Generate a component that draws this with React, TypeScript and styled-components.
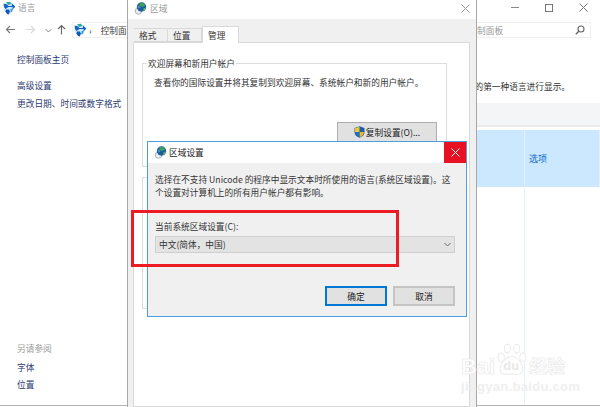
import * as React from 'react'
import styled, { createGlobalStyle } from 'styled-components'

const GlobalStyle = createGlobalStyle`
  html, body {
    margin: 0;
    padding: 0;
    background: #fff;
  }
  * {
    box-sizing: border-box;
  }
`

const FONT = `"Noto Sans CJK SC", "Liberation Sans", sans-serif`

const GlobeIcon = () => (
  <svg width="13" height="14" viewBox="0 0 13 14">
    <path d="M6.500 1.200c3 0 5 2.200 5 5.200 0 3.400-2.200 6-5 6s-5-2.600-5-6c0-3 2-5.200 5-5.200z" fill="#cfe8f8" />
    <path d="M1.500 2.500l4 1 1 2.500-3 2-1.500-2z" fill="#1565c8" />
    <path d="M4 1.200l4-.4 1.500 2-3 1.200z" fill="#2fa7a0" />
    <path d="M6 5.500h6.500l-2-1.800v1.200M12.500 5.800l-2 1.700" stroke="#0f5fc0" strokeWidth="1.200" fill="none" />
    <path d="M4 8.500l3 0 .8 2-1 3-1.800-.6-1.500-2.400z" fill="#0d58b8" />
    <path d="M8.500 8l2.500-.5-.8 3-1.700 1z" fill="#3a9bd8" />
  </svg>
)

const RegionGlobe = () => (
  <svg width="13" height="13" viewBox="0 0 13 13">
    <circle cx="4.500" cy="9" r="3.300" fill="#e8ecef" stroke="#a9b4bc" strokeWidth="1" />
    <circle cx="7.500" cy="5" r="4.700" fill="#1c5f9c" />
    <path d="M5.500 1l4 .2 1.700 2.600-3 1.200-2.700-1.500z" fill="#3fa356" />
    <path d="M9.500 6.500l2.500-.8-.8 2.600-1.800.6z" fill="#6fb95f" />
    <path d="M3.500 4l2-.5 1 2-2 1z" fill="#4c93cc" />
  </svg>
)

const ShieldIcon = () => (
  <svg width="11" height="12" viewBox="0 0 11 12">
    <path d="M5.500 0.300L10.500 2v4c0 3-2.200 4.800-5 5.700C2.700 10.800 0.500 9 0.500 6V2z" fill="#1c5fa8" />
    <path d="M5.500 0.800V6H10c-.1 2.700-2 4.300-4.500 5.200z" fill="#f3b81f" />
    <path d="M5.500 6H1c.1 2.700 2 4.300 4.500 5.200z" fill="#1c72c4" />
    <path d="M5.500 0.800L1 2.300V6h4.500z" fill="#f3c632" />
  </svg>
)

const CloseGlyph = ({ color = '#777', size = 9 }: { color?: string; size?: number }) => (
  <svg width={size} height={size} viewBox="0 0 9 9">
    <path d="M.5.500l8 8M8.500.500l-8 8" stroke={color} strokeWidth="1" fill="none" />
  </svg>
)

const SearchGlyph = () => (
  <svg width="10" height="10" viewBox="0 0 10 10">
    <circle cx="6" cy="4" r="3" stroke="#666" strokeWidth="1.100" fill="none" />
    <path d="M3.800 6.200L.8 9.200" stroke="#666" strokeWidth="1.400" />
  </svg>
)

const ArrowGlyph = ({ dir, color }: { dir: 'left' | 'right' | 'up'; color: string }) => {
  const d = {
    left: 'M10 5.500H1.500M5 2L1.500 5.500 5 9',
    right: 'M1 5.500h8.500M6 2l3.500 3.500L6 9',
    up: 'M5.500 10.500V1.500M2 5l3.500-3.500L9 5'
  }[dir]
  return (
    <svg width="11" height="12" viewBox="0 0 11 12">
      <path d={d} stroke={color} strokeWidth="1.100" fill="none" />
    </svg>
  )
}

const Chevron = ({ color = '#666' }: { color?: string }) => (
  <svg width="7" height="5" viewBox="0 0 7 5">
    <path d="M.5 1l3 3 3-3" stroke={color} strokeWidth="1" fill="none" />
  </svg>
)

const App = () => {
  return (
    <>
      <GlobalStyle />
      <Desktop>
        <ControlWindow>
          <TitleBar>
            <TitleLeft>
              <GlobeIcon />
              <FadedTitle>语言</FadedTitle>
            </TitleLeft>
            <WindowButtons>
              <MinButton />
              <MaxButton />
              <CloseGlyph />
            </WindowButtons>
          </TitleBar>
          <NavBar>
            <ArrowGlyph dir="left" color="#777" />
            <ArrowGlyph dir="right" color="#d8d8d8" />
            <Chevron color="#888" />
            <UpSlot>
              <ArrowGlyph dir="up" color="#666" />
            </UpSlot>
            <AddressBar>
              <GlobeIcon />
              <Crumb>›</Crumb>
              <CrumbText>控制面板</CrumbText>
            </AddressBar>
            <SearchBox>
              <SearchText>搜索控制面板</SearchText>
              <SearchGlyph />
            </SearchBox>
          </NavBar>
          <Body>
            <Sidebar>
              <SideLink $gap={0}>控制面板主页</SideLink>
              <SideLink $gap={13}>高级设置</SideLink>
              <SideLink $gap={5}>更改日期、时间或数字格式</SideLink>
              <SideFooter>
                <SideHeading>另请参阅</SideHeading>
                <SideLink $gap={6}>字体</SideLink>
                <SideLink $gap={4}>位置</SideLink>
              </SideFooter>
            </Sidebar>
            <Main>
              <Description>的第一种语言进行显示。</Description>
              <TableHead />
              <SelectedRow>
                <FirstCell />
                <OptionCell>选项</OptionCell>
              </SelectedRow>
              <EmptyRow>
                <FirstCell />
              </EmptyRow>
            </Main>
          </Body>
        </ControlWindow>

        <RegionWindow>
          <RegionTitle>
            <TitleLeft>
              <RegionGlobe />
              <FadedTitle>区域</FadedTitle>
            </TitleLeft>
            <CloseGlyph color="#999" />
          </RegionTitle>
          <RegionBody>
            <Tabs>
              <Tab>格式</Tab>
              <Tab>位置</Tab>
              <Tab $active>管理</Tab>
            </Tabs>
            <TabPanel>
              <GroupBox $height={104}>
                <GroupLabel>欢迎屏幕和新用户帐户</GroupLabel>
                <GroupText>
                  查看你的国际设置并将其复制到欢迎屏幕、系统帐户和新的用户帐户。
                </GroupText>
                <CopyRow>
                  <CopyButton>
                    <ShieldIcon />
                    复制设置(O)...
                  </CopyButton>
                </CopyRow>
              </GroupBox>
              <GroupBox $height={132} />
            </TabPanel>
          </RegionBody>
        </RegionWindow>

        <Dialog>
          <DialogTitle>
            <DialogCaption>
              <RegionGlobe />
              区域设置
            </DialogCaption>
            <DialogClose>
              <CloseGlyph color="#fff" />
            </DialogClose>
          </DialogTitle>
          <DialogBody>
            <DialogText>
              选择在不支持 Unicode 的程序中显示文本时所使用的语言(系统区域设置)。这
              个设置对计算机上的所有用户帐户都有影响。
            </DialogText>
            <FieldLabel>当前系统区域设置(C):</FieldLabel>
            <FakeSelect>
              中文(简体，中国)
              <Chevron />
            </FakeSelect>
            <DialogActions>
              <ActionButton $primary>确定</ActionButton>
              <ActionButton>取消</ActionButton>
            </DialogActions>
          </DialogBody>
        </Dialog>

        <RedMark />

        <Watermark>
          <WatermarkTop>
            <WatermarkWord>Bai</WatermarkWord>
            <PawBox>
              <svg width="31" height="33" viewBox="0 0 30 30" preserveAspectRatio="none">
                <g fill="#fff" stroke="#ececec" strokeWidth="1">
                  <ellipse cx="5" cy="13" rx="3" ry="4" />
                  <ellipse cx="11" cy="5" rx="3" ry="4" />
                  <ellipse cx="20" cy="5" rx="3" ry="4" />
                  <ellipse cx="26" cy="13" rx="3" ry="4" />
                  <path d="M15 12c5 0 11 7 11 12 0 5-6 5-11 4-5 1-11 1-11-4 0-5 6-12 11-12z" />
                </g>
              </svg>
              <PawText>du</PawText>
            </PawBox>
            <WatermarkCn>经验</WatermarkCn>
          </WatermarkTop>
          <WatermarkUrl>jingyan.baidu.com</WatermarkUrl>
        </Watermark>
      </Desktop>
    </>
  )
}

export default App

const Desktop = styled.div`
  position: relative;
  width: 600px;
  height: 407px;
  overflow: hidden;
  background: #fff;
  font-family: ${FONT};
  font-size: 8.7px;
  line-height: 13px;
  color: #333;
`

const ControlWindow = styled.div`
  display: flex;
  flex-direction: column;
  width: 600px;
  height: 406px;
  border-bottom: 1px solid #b4b4b4;
`

const TitleBar = styled.div`
  display: flex;
  align-items: center;
  justify-content: space-between;
  height: 15px;
  padding: 0 12px 0 2px;
`

const TitleLeft = styled.div`
  display: flex;
  align-items: center;
  gap: 3px;
`

const FadedTitle = styled.span`
  color: #9a9a9a;
`

const WindowButtons = styled.div`
  display: flex;
  align-items: center;
  gap: 26px;
`

const MinButton = styled.span`
  width: 8px;
  height: 1px;
  background: #888;
`

const MaxButton = styled.span`
  width: 8px;
  height: 8px;
  border: 1px solid #777;
`

const NavBar = styled.div`
  display: flex;
  align-items: center;
  gap: 9px;
  height: 30px;
  padding: 0 9px 0 5px;
`

const UpSlot = styled.span`
  display: flex;
  margin-left: -5px;
`

const AddressBar = styled.div`
  display: flex;
  align-items: center;
  gap: 3px;
  flex: 1;
  height: 16px;
  margin-left: -4px;
  border: 1px solid #f0f0f0;
`

const Crumb = styled.span`
  color: #444;
`

const CrumbText = styled.span`
  margin-left: 6px;
  color: #444;
`

const SearchBox = styled.div`
  display: flex;
  align-items: center;
  justify-content: space-between;
  width: 145px;
  height: 16px;
  margin-left: -9px;
  padding: 0 5px;
  border: 1px solid #efefef;
  border-left: none;
`

const SearchText = styled.span`
  color: #9a9a9a;
`

const Body = styled.div`
  display: flex;
  flex: 1;
  min-height: 0;
`

const Sidebar = styled.div`
  display: flex;
  flex-direction: column;
  width: 127px;
  flex-shrink: 0;
  padding: 8px 0 14px 17px;
`

const SideLink = styled.div<{ $gap: number }>`
  margin-top: ${({ $gap }) => $gap}px;
  color: #2b3a72;
`

const SideFooter = styled.div`
  display: flex;
  flex-direction: column;
  margin-top: auto;
`

const SideHeading = styled.div`
  color: #9c9c9c;
`

const Main = styled.div`
  display: flex;
  flex-direction: column;
  flex: 1;
  min-width: 0;
`

const Description = styled.div`
  margin-top: 35px;
  padding-right: 30px;
  text-align: right;
  white-space: nowrap;
  color: #333;
`

const TableHead = styled.div`
  height: 24px;
  margin-top: 10px;
  background: #f4f5f6;
  border-bottom: 2px solid #eaeaea;
`

const SelectedRow = styled.div`
  display: flex;
  height: 57px;
  margin-top: 3px;
  background: #cce8ff;
`

const EmptyRow = styled.div`
  display: flex;
  flex: 1;
`

const FirstCell = styled.div`
  width: 398px;
  border-right: 1px solid #e6f0fa;
`

const OptionCell = styled.div`
  display: flex;
  align-items: center;
  flex: 1;
  padding-left: 4px;
  color: #0a66c8;
  font-size: 9px;
  border-right: 1px solid #e6f0fa;
`

const RegionWindow = styled.div`
  position: absolute;
  left: 127px;
  top: 0;
  display: flex;
  flex-direction: column;
  width: 350px;
  height: 407px;
  background: #fff;
  border-left: 1px solid #a8a8a8;
  border-right: 1px solid #a8a8a8;
`

const RegionTitle = styled.div`
  display: flex;
  align-items: center;
  justify-content: space-between;
  height: 19px;
  padding: 0 6px 3px 6px;
  flex-shrink: 0;
`

const RegionBody = styled.div`
  display: flex;
  flex-direction: column;
  flex: 1;
  padding: 6px 6px 0 5px;
  background: #f0f0f0;
`

const Tabs = styled.div`
  display: flex;
  align-items: flex-end;
  height: 17px;
  padding-left: 1px;
  flex-shrink: 0;
`

const Tab = styled.div<{ $active?: boolean }>`
  position: relative;
  z-index: 1;
  display: flex;
  align-items: center;
  width: ${({ $active }) => ($active ? 37 : 34)}px;
  height: ${({ $active }) => ($active ? 17 : 14)}px;
  margin-bottom: ${({ $active }) => ($active ? -1 : 0)}px;
  padding-left: 5px;
  background: ${({ $active }) => ($active ? '#fff' : '#f0f0f0')};
  border: 1px solid #d9d9d9;
  border-bottom: ${({ $active }) => ($active ? 'none' : '1px solid #d9d9d9')};
  border-left: ${({ $active }) => ($active ? '1px solid #d9d9d9' : 'none')};
  color: #333;
`

const TabPanel = styled.div`
  display: flex;
  flex-direction: column;
  gap: 10px;
  flex: 1;
  padding: 20px 22px 0 8px;
  background: #fff;
  border: 1px solid #d9d9d9;
`

const GroupBox = styled.div<{ $height: number }>`
  position: relative;
  display: flex;
  flex-direction: column;
  height: ${({ $height }) => $height}px;
  padding: 12px 9px 0 11px;
  border: 1px solid #dcdcdc;
  flex-shrink: 0;
`

const GroupLabel = styled.span`
  position: absolute;
  left: 4px;
  top: -7px;
  padding: 0 1px;
  background: #fff;
  color: #333;
`

const GroupText = styled.div`
  white-space: nowrap;
  color: #333;
`

const CopyRow = styled.div`
  display: flex;
  justify-content: flex-end;
  margin-top: 33px;
`

const CopyButton = styled.div`
  display: flex;
  align-items: center;
  justify-content: center;
  gap: 1px;
  width: 100px;
  height: 20px;
  background: #e1e1e1;
  border: 1px solid #adadad;
  color: #222;
`

const Dialog = styled.div`
  position: absolute;
  left: 147px;
  top: 141px;
  display: flex;
  flex-direction: column;
  width: 320px;
  height: 176px;
  background: #f0f0f0;
  border: 1px solid #4a9fdf;
`

const DialogTitle = styled.div`
  display: flex;
  align-items: stretch;
  justify-content: space-between;
  height: 21px;
  background: #fff;
  flex-shrink: 0;
`

const DialogCaption = styled.div`
  display: flex;
  align-items: center;
  gap: 2px;
  padding-left: 6px;
  color: #222;
`

const DialogClose = styled.div`
  display: flex;
  align-items: center;
  justify-content: center;
  width: 22px;
  background: #e81123;
`

const DialogBody = styled.div`
  display: flex;
  flex-direction: column;
  flex: 1;
  padding: 10px 11px 0 7px;
`

const DialogText = styled.div`
  color: #333;
`

const FieldLabel = styled.div`
  margin-top: 21px;
  color: #333;
`

const FakeSelect = styled.div`
  display: flex;
  align-items: center;
  justify-content: space-between;
  height: 17px;
  margin-top: 3px;
  padding: 0 3px;
  background: #e3e3e3;
  border: 1px solid #cfcfcf;
  color: #333;
`

const DialogActions = styled.div`
  display: flex;
  justify-content: flex-end;
  gap: 6px;
  margin-top: 33px;
`

const ActionButton = styled.div<{ $primary?: boolean }>`
  display: flex;
  align-items: center;
  justify-content: center;
  width: 62px;
  height: 20px;
  background: #e1e1e1;
  border: ${({ $primary }) => ($primary ? '2px solid #0078d7' : '2px solid #c4c4c4')};
  color: #222;
`

const RedMark = styled.div`
  position: absolute;
  left: 131px;
  top: 210px;
  width: 268px;
  height: 57px;
  border: 3px solid #ed1c24;
`

const Watermark = styled.div`
  position: absolute;
  left: 461px;
  top: 342px;
  display: flex;
  flex-direction: column;
  font-family: "Liberation Sans", sans-serif;
`

const WatermarkTop = styled.div`
  display: flex;
  align-items: flex-end;
  height: 34px;
`

const WatermarkWord = styled.span`
  margin-bottom: -3px;
  font-size: 22px;
  line-height: 24px;
  font-weight: 700;
  color: #fff;
  -webkit-text-stroke: 0.6px #e8e8e8;
`

const PawBox = styled.div`
  position: relative;
  width: 31px;
  height: 33px;
  margin-left: 1px;
`

const PawText = styled.span`
  position: absolute;
  left: 7px;
  top: 15px;
  font-size: 13px;
  line-height: 16px;
  font-weight: 700;
  color: #e8e8e8;
`

const WatermarkCn = styled.span`
  margin-left: 2px;
  font-family: ${FONT};
  font-size: 18px;
  line-height: 22px;
  font-weight: 700;
  color: #fff;
  -webkit-text-stroke: 0.5px #e6e6e6;
`

const WatermarkUrl = styled.span`
  margin-top: 4px;
  font-size: 13px;
  line-height: 14px;
  letter-spacing: 0.3px;
  font-weight: 700;
  color: #efefef;
`
